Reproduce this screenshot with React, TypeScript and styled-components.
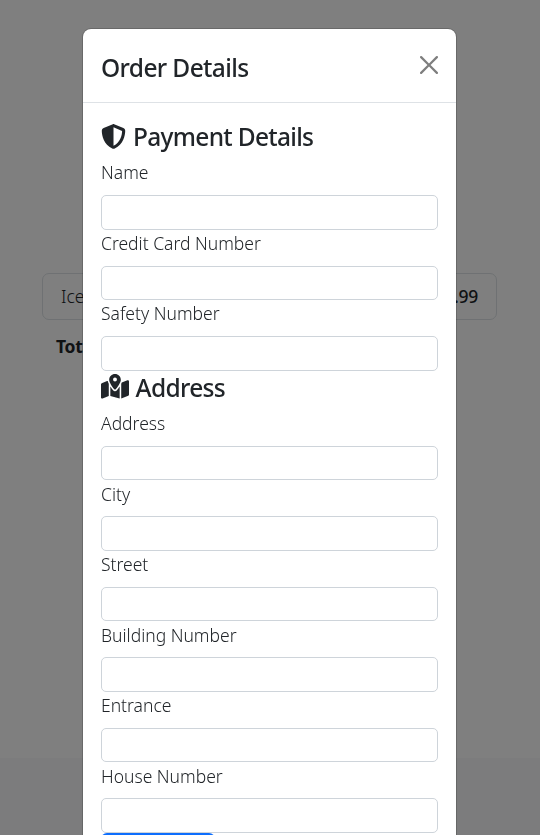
import React from "react";
import styled, { createGlobalStyle } from "styled-components";
import { FaMapLocationDot, FaShieldHalved } from "react-icons/fa6";

const GlobalStyle = createGlobalStyle`
  *, *::before, *::after { box-sizing: border-box; }
  body {
    margin: 0;
    overflow: hidden;
    background: #fff;
    color: #212529;
    font-family: "Segoe UI", "Noto Sans", "Open Sans", sans-serif;
    font-size: 17.5px;
  }
`;

const Page = styled.main`
  display: flex;
  flex-direction: column;
  height: 835px;
`;

const Cart = styled.section`
  flex: 1;
  padding: 273px 43px 0 42px;
`;

const CartItem = styled.div`
  display: flex;
  align-items: center;
  justify-content: space-between;
  height: 47px;
  padding: 0 18px 2px;
  border: 1px solid #dee2e6;
  border-radius: 7px;
`;

const ItemName = styled.span`
  font-weight: 350;
`;

const Price = styled.span`
  font-weight: 500;
  letter-spacing: -0.3px;
`;

const Total = styled.div`
  padding: 14px 14px;
  font-weight: 700;
  line-height: 24px;
  letter-spacing: -0.3px;
`;

const Footer = styled.footer`
  height: 77px;
  background: #f8f9fa;
`;

const Backdrop = styled.div`
  position: fixed;
  inset: 0;
  display: flex;
  justify-content: center;
  align-items: flex-start;
  padding: 28px 1px 0 0;
  overflow: hidden;
  background: rgba(0, 0, 0, 0.5);
`;

const Dialog = styled.div`
  width: 375px;
  border: 1px solid rgba(0, 0, 0, 0.175);
  border-radius: 9px;
  background: #fff;
  background-clip: padding-box;
`;

const DialogHeader = styled.header`
  display: flex;
  align-items: center;
  justify-content: space-between;
  height: 74px;
  padding: 4px 18px 0;
  border-bottom: 1px solid #dee2e6;
`;

const Heading = styled.h4<{ $spacing: number; $gap?: number }>`
  display: flex;
  align-items: center;
  gap: ${(p) => p.$gap ?? 0}px;
  height: 30px;
  margin: 0;
  font-size: 24.5px;
  font-weight: 500;
  line-height: 30px;
  white-space: nowrap;
  letter-spacing: ${(p) => p.$spacing}px;
`;

const CloseButton = styled.button`
  display: flex;
  margin: 0 0 5px;
  padding: 0;
  border: 0;
  background: none;
  opacity: 0.5;
`;

const DialogBody = styled.form`
  padding: 19px 18px;
`;

const Section = styled.section`
  height: 250.8px;
`;

const FieldList = styled.div`
  padding-top: 8px;
`;

const Field = styled.label`
  display: flex;
  flex-direction: column;
  height: 70.5px;
  padding-top: 0.4px;
  font-weight: 350;
  line-height: 24px;
`;

const Input = styled.input`
  width: 100%;
  height: 34.5px;
  margin-top: 10.7px;
  padding: 6px 12px;
  border: 1px solid #ced4da;
  border-radius: 5px;
  background: #fff;
  font: inherit;
`;

const Submit = styled.button`
  display: block;
  width: 114px;
  height: 35px;
  margin-top: -0.7px;
  border: 0;
  border-radius: 6px;
  background: #0d6efd;
`;

const MapIcon = styled(FaMapLocationDot)`
  width: 28px;
  height: 25px;
  margin-bottom: 2px;
`;

const ShieldIcon = styled(FaShieldHalved)`
  width: 25px;
  height: 25px;
  margin-bottom: 2px;
`;

const paymentFields = ["Name", "Credit Card Number", "Safety Number"];

const addressFields = [
  "Address",
  "City",
  "Street",
  "Building Number",
  "Entrance",
  "House Number",
];

const Fields = ({ items }: { items: string[] }) => (
  <FieldList>
    {items.map((label) => (
      <Field key={label}>
        <span>{label}</span>
        <Input type="text" />
      </Field>
    ))}
  </FieldList>
);

export default function App() {
  return (
    <>
      <GlobalStyle />
      <Page>
        <Cart>
          <CartItem>
            <ItemName>Ice</ItemName>
            <Price>.99</Price>
          </CartItem>
          <Total>Total</Total>
        </Cart>
        <Footer />
      </Page>
      <Backdrop>
        <Dialog role="dialog" aria-label="Order Details">
          <DialogHeader>
            <Heading $spacing={-0.62}>Order Details</Heading>
            <CloseButton type="button" aria-label="Close">
              <svg width="18" height="18" viewBox="0 0 16 16">
                <path d="M.293.293a1 1 0 0 1 1.414 0L8 6.586 14.293.293a1 1 0 1 1 1.414 1.414L9.414 8l6.293 6.293a1 1 0 0 1-1.414 1.414L8 9.414l-6.293 6.293a1 1 0 0 1-1.414-1.414L6.586 8 .293 1.707a1 1 0 0 1 0-1.414z" />
              </svg>
            </CloseButton>
          </DialogHeader>
          <DialogBody>
            <Section>
              <Heading $spacing={-0.7} $gap={7}>
                <ShieldIcon />
                <span>Payment Details</span>
              </Heading>
              <Fields items={paymentFields} />
            </Section>
            <Heading $spacing={-0.65} $gap={6.5}>
              <MapIcon />
              <span>Address</span>
            </Heading>
            <Fields items={addressFields} />
            <Submit type="submit" aria-label="Submit order" />
          </DialogBody>
        </Dialog>
      </Backdrop>
    </>
  );
}
